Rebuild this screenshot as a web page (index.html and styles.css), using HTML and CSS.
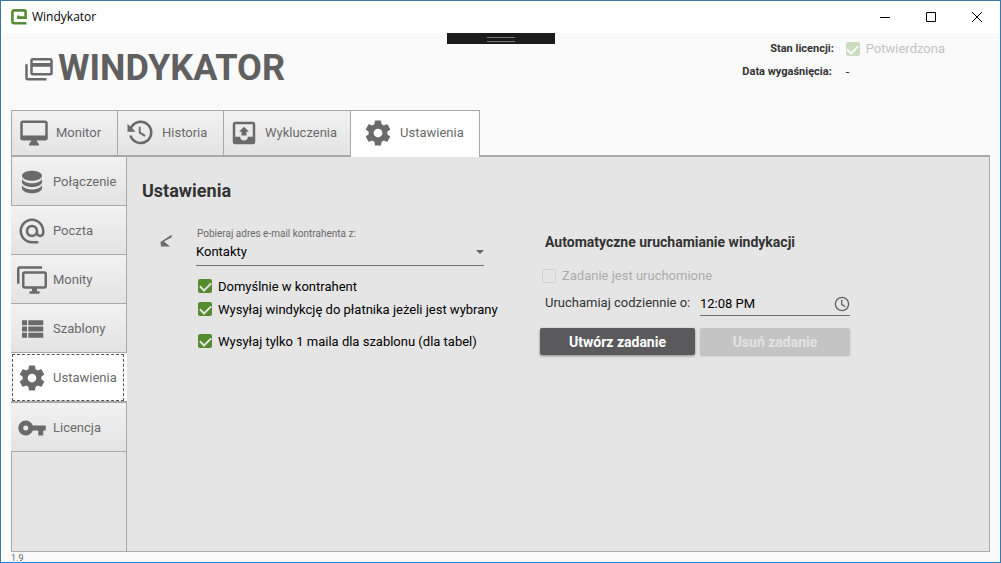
FILE: index.html
```html
<!DOCTYPE html>
<html lang="pl">
<head>
<meta charset="utf-8">
<title>Windykator</title>
<link rel="stylesheet" href="styles.css">
</head>
<body>
<div class="window">
  <header class="titlebar">
    <svg class="titlebar-logo" viewBox="0 0 16 16" aria-hidden="true"><path d="M15.5 14.3H3Q1.4 14.3 1.4 12.8V3Q1.4 1.4 3 1.4H13Q14.6 1.4 14.6 3V8.6H7.4V6.6" fill="none" stroke="#568c35" stroke-width="2.6"/></svg>
    <span class="titlebar-name">Windykator</span>
    <div class="titlebar-controls">
      <button class="control" type="button" aria-label="Minimalizuj"><svg viewBox="0 0 10 10"><path d="M0 5.5H10"/></svg></button>
      <button class="control" type="button" aria-label="Maksymalizuj"><svg viewBox="0 0 10 10"><path d="M.5.5H9.5V9.5H.5Z"/></svg></button>
      <button class="control" type="button" aria-label="Zamknij"><svg viewBox="0 0 10 10"><path d="M0 0L10 10M10 0L0 10"/></svg></button>
    </div>
  </header>

  <div class="body">
    <div class="grip"></div>
    <div class="banner">
      <svg class="icon" viewBox="0 0 24 24" aria-hidden="true"><path d="M21,8V6H7V8H21M21,16V11H7V16H21M21,4A2,2 0 0,1 23,6V16A2,2 0 0,1 21,18H7C5.89,18 5,17.1 5,16V6C5,4.89 5.89,4 7,4H21M3,20H18V22H3A2,2 0 0,1 1,20V9H3V20Z"/></svg>
      <h1 class="banner-title">WINDYKATOR</h1>
      <dl class="license">
        <dt>Stan licencji:</dt>
        <dd><label class="check check--faded"><input type="checkbox" checked disabled><span>Potwierdzona</span></label></dd>
        <dt class="license-date">Data wygaśnięcia:</dt>
        <dd>-</dd>
      </dl>
    </div>

    <nav class="tabs">
      <button class="tab" type="button"><svg class="icon" viewBox="0 0 24 24"><path d="M21,14H3V4H21M21,2H3C1.89,2 1,2.89 1,4V16A2,2 0 0,0 3,18H10L8,21V22H16V21L14,18H21A2,2 0 0,0 23,16V4C23,2.89 22.1,2 21,2Z"/></svg>Monitor</button>
      <button class="tab" type="button"><svg class="icon" viewBox="0 0 24 24"><path d="M11,7V12.11L15.71,14.9L16.5,13.62L12.5,11.25V7M12.5,2C8.97,2 5.91,3.92 4.27,6.77L2,4.5V11H8.5L5.75,8.25C6.96,5.73 9.5,4 12.5,4A7.5,7.5 0 0,1 20,11.5A7.5,7.5 0 0,1 12.5,19C9.23,19 6.47,16.91 5.44,14H3.34C4.44,18.03 8.11,21 12.5,21C17.74,21 22,16.75 22,11.5A9.5,9.5 0 0,0 12.5,2Z"/></svg>Historia</button>
      <button class="tab tab--compact" type="button"><svg class="icon" viewBox="0 0 24 24"><path d="M14,14H10V11H8L12,7L16,11H14V14M5,15V5H19V15H15A3,3 0 0,1 12,18A3,3 0 0,1 9,15H5M19,3H5C3.89,3 3,3.9 3,5V19A2,2 0 0,0 5,21H19A2,2 0 0,0 21,19V5A2,2 0 0,0 19,3Z"/></svg>Wykluczenia</button>
      <button class="tab tab--active" type="button" aria-current="page"><svg class="icon" viewBox="0 0 24 24"><path d="M12,15.5A3.5,3.5 0 0,1 8.5,12A3.5,3.5 0 0,1 12,8.5A3.5,3.5 0 0,1 15.5,12A3.5,3.5 0 0,1 12,15.5M19.43,12.97C19.47,12.65 19.5,12.33 19.5,12C19.5,11.67 19.47,11.34 19.43,11L21.54,9.37C21.73,9.22 21.78,8.95 21.66,8.73L19.66,5.27C19.54,5.05 19.27,4.96 19.05,5.05L16.56,6.05C16.04,5.66 15.5,5.32 14.87,5.07L14.5,2.42C14.46,2.18 14.25,2 14,2H10C9.75,2 9.54,2.18 9.5,2.42L9.13,5.07C8.5,5.32 7.96,5.66 7.44,6.05L4.95,5.05C4.73,4.96 4.46,5.05 4.34,5.27L2.34,8.73C2.21,8.95 2.27,9.22 2.46,9.37L4.57,11C4.53,11.34 4.5,11.67 4.5,12C4.5,12.33 4.53,12.65 4.57,12.97L2.46,14.63C2.27,14.78 2.21,15.05 2.34,15.27L4.34,18.73C4.46,18.95 4.73,19.03 4.95,18.95L7.44,17.94C7.96,18.34 8.5,18.68 9.13,18.93L9.5,21.58C9.54,21.82 9.75,22 10,22H14C14.25,22 14.46,21.82 14.5,21.58L14.87,18.93C15.5,18.67 16.04,18.34 16.56,17.94L19.05,18.95C19.27,19.03 19.54,18.95 19.66,18.73L21.66,15.27C21.78,15.05 21.73,14.78 21.54,14.63L19.43,12.97Z"/></svg>Ustawienia</button>
    </nav>

    <div class="panel">
      <nav class="side">
        <button class="side-tab" type="button"><svg class="icon" viewBox="0 0 24 24"><path d="M12,3C7.58,3 4,4.79 4,7C4,9.21 7.58,11 12,11C16.42,11 20,9.21 20,7C20,4.79 16.42,3 12,3M4,9V12C4,14.21 7.58,16 12,16C16.42,16 20,14.21 20,12V9C20,11.21 16.42,13 12,13C7.58,13 4,11.21 4,9M4,14V17C4,19.21 7.58,21 12,21C16.42,21 20,19.21 20,17V14C20,16.21 16.42,18 12,18C7.58,18 4,16.21 4,14Z"/></svg>Połączenie</button>
        <button class="side-tab" type="button"><svg class="icon" viewBox="0 0 24 24"><path d="M12 1.95c-5.52 0-10 4.48-10 10s4.48 10 10 10h5v-2h-5c-4.34 0-8-3.66-8-8s3.66-8 8-8 8 3.66 8 8v1.43c0 .79-.71 1.57-1.5 1.57s-1.5-.78-1.5-1.57v-1.43c0-2.76-2.24-5-5-5s-5 2.24-5 5 2.24 5 5 5c1.38 0 2.64-.56 3.54-1.47.65.89 1.77 1.47 2.96 1.47 1.97 0 3.5-1.6 3.5-3.57v-1.43c0-5.52-4.48-10-10-10zm0 13c-1.66 0-3-1.34-3-3s1.34-3 3-3 3 1.34 3 3-1.34 3-3 3z"/></svg>Poczta</button>
        <button class="side-tab" type="button"><svg class="icon" viewBox="0 0 24 24"><path d="M22,17V7H6V17H22M22,5A2,2 0 0,1 24,7V17C24,18.11 23.1,19 22,19H16V21H18V23H10V21H12V19H6C4.89,19 4,18.11 4,17V7A2,2 0 0,1 6,5H22M2,3V15H0V3A2,2 0 0,1 2,1H20V3H2Z"/></svg>Monity</button>
        <button class="side-tab" type="button"><svg class="icon" viewBox="0 0 24 24"><path d="M9,5V9H21V5M9,19H21V15H9M9,14H21V10H9M4,9H8V5H4M4,19H8V15H4M4,14H8V10H4V14Z"/></svg>Szablony</button>
        <button class="side-tab side-tab--active" type="button" aria-current="page"><svg class="icon" viewBox="0 0 24 24"><path d="M12,15.5A3.5,3.5 0 0,1 8.5,12A3.5,3.5 0 0,1 12,8.5A3.5,3.5 0 0,1 15.5,12A3.5,3.5 0 0,1 12,15.5M19.43,12.97C19.47,12.65 19.5,12.33 19.5,12C19.5,11.67 19.47,11.34 19.43,11L21.54,9.37C21.73,9.22 21.78,8.95 21.66,8.73L19.66,5.27C19.54,5.05 19.27,4.96 19.05,5.05L16.56,6.05C16.04,5.66 15.5,5.32 14.87,5.07L14.5,2.42C14.46,2.18 14.25,2 14,2H10C9.75,2 9.54,2.18 9.5,2.42L9.13,5.07C8.5,5.32 7.96,5.66 7.44,6.05L4.95,5.05C4.73,4.96 4.46,5.05 4.34,5.27L2.34,8.73C2.21,8.95 2.27,9.22 2.46,9.37L4.57,11C4.53,11.34 4.5,11.67 4.5,12C4.5,12.33 4.53,12.65 4.57,12.97L2.46,14.63C2.27,14.78 2.21,15.05 2.34,15.27L4.34,18.73C4.46,18.95 4.73,19.03 4.95,18.95L7.44,17.94C7.96,18.34 8.5,18.68 9.13,18.93L9.5,21.58C9.54,21.82 9.75,22 10,22H14C14.25,22 14.46,21.82 14.5,21.58L14.87,18.93C15.5,18.67 16.04,18.34 16.56,17.94L19.05,18.95C19.27,19.03 19.54,18.95 19.66,18.73L21.66,15.27C21.78,15.05 21.73,14.78 21.54,14.63L19.43,12.97Z"/></svg>Ustawienia</button>
        <button class="side-tab" type="button"><svg class="icon" viewBox="0 0 24 24"><path d="M7,14A2,2 0 0,1 5,12A2,2 0 0,1 7,10A2,2 0 0,1 9,12A2,2 0 0,1 7,14M12.65,10C11.83,7.67 9.61,6 7,6A6,6 0 0,0 1,12A6,6 0 0,0 7,18C9.61,18 11.83,16.33 12.65,14H17V18H21V14H23V10H12.65Z"/></svg>Licencja</button>
        <div class="side-rest"></div>
      </nav>

      <main class="content">
        <h2 class="content-title">Ustawienia</h2>
        <div class="columns">
          <section class="options">
            <svg class="options-mark" viewBox="0 0 12 14" aria-hidden="true"><path d="M11.7 .8V3.2L4 7.6L10 12.6H1L.5 8Z"/></svg>
            <div class="options-body">
              <div class="field">
                <label class="field-label" for="source">Pobieraj adres e-mail kontrahenta z:</label>
                <div class="field-box">
                  <select class="field-input" id="source"><option>Kontakty</option></select>
                  <svg class="caret" viewBox="0 0 8 4" aria-hidden="true"><path d="M0 0H8L4 4Z"/></svg>
                </div>
              </div>
              <div class="checks">
                <label class="check"><input type="checkbox" checked><span>Domyślnie w kontrahent</span></label>
                <label class="check"><input type="checkbox" checked><span>Wysyłaj windykcję do płatnika jeżeli jest wybrany</span></label>
                <label class="check check--apart"><input type="checkbox" checked><span>Wysyłaj tylko 1 maila dla szablonu (dla tabel)</span></label>
              </div>
            </div>
          </section>

          <section class="schedule">
            <h3 class="schedule-title">Automatyczne uruchamianie windykacji</h3>
            <label class="check check--faded schedule-state"><input type="checkbox" disabled><span>Zadanie jest uruchomione</span></label>
            <div class="schedule-grid">
              <label class="schedule-label" for="time">Uruchamiaj codziennie o:</label>
              <div class="field-box field-box--inset">
                <input class="field-input" id="time" type="text" value="12:08 PM">
                <svg class="clock" viewBox="0 0 16 16" aria-hidden="true"><circle cx="8" cy="8" r="6.6"/><path d="M7.7 3.8V8.3L11.2 10.8"/></svg>
              </div>
              <button class="action" type="button">Utwórz zadanie</button>
              <button class="action" type="button" disabled>Usuń zadanie</button>
            </div>
          </section>
        </div>
      </main>
    </div>
    <footer class="version">1.9</footer>
  </div>
</div>
</body>
</html>
```
FILE: styles.css
```css
* { box-sizing: border-box; }

body {
  margin: 0;
  font-family: Roboto, "Liberation Sans", sans-serif;
  font-size: 13px;
  line-height: 20px;
  color: #333;
}

button, input, select { font: inherit; }

.window {
  display: flex;
  flex-direction: column;
  min-height: 100vh;
  border: 1px solid #3a77ab;
  border-bottom-color: #1883d7;
  background: #fafafa;
}

.titlebar {
  display: flex;
  align-items: center;
  height: 32px;
  padding-left: 10px;
  gap: 5px;
  background: #fff;
  color: #000;
}
.titlebar-logo { width: 16px; height: 16px; }
.titlebar-name { font-family: "Open Sans", "Noto Sans", sans-serif; font-size: 12px; }
.titlebar-controls { display: flex; margin-left: auto; }
.control {
  display: grid;
  place-items: center;
  width: 46px;
  height: 30px;
  padding: 0;
  border: 0;
  background: none;
}
.control svg { width: 10px; height: 10px; overflow: visible; fill: none; stroke: #000; stroke-width: 1; }

.body {
  position: relative;
  display: flex;
  flex: 1;
  flex-direction: column;
  padding: 0 10px;
}

.grip {
  position: absolute;
  top: 0;
  left: 50%;
  width: 108px;
  height: 11px;
  transform: translateX(-50%);
  background: #1b1b1b;
}
.grip::before {
  content: "";
  display: block;
  width: 28px;
  height: 3px;
  margin: 4px auto;
  border: solid #777;
  border-width: 1px 0;
}

.icon { flex: none; width: 30px; height: 30px; fill: #6a6a6a; }

.banner {
  display: flex;
  align-items: flex-start;
  height: 77px;
  padding: 7px 41px 0 13px;
}
.banner .icon { margin-top: 13px; }
.banner-title {
  margin: 7px 0 0 4px;
  font-size: 36px;
  line-height: 42px;
  font-weight: 700;
  color: #606060;
}
.license {
  display: grid;
  grid-template-columns: auto auto;
  gap: 5px 12px;
  margin: 0 4px 0 auto;
}
.license dt { font-size: 11px; line-height: 18px; font-weight: 700; text-align: right; }
.license dd { margin: 0; line-height: 18px; }
.license .license-date { padding-right: 2px; }

.tabs {
  display: flex;
  height: 47px;
  box-shadow: inset 0 -2px #aaa;
}
.tab, .side-tab {
  display: flex;
  align-items: center;
  border: 0 solid #a8a8a8;
  background: linear-gradient(#f2f2f2, #e3e3e3);
  color: #6a6a6a;
  white-space: nowrap;
}
.tab {
  gap: 7px;
  min-width: 106px;
  margin-bottom: 2px;
  padding: 0 12px 0 7px;
  border-width: 1px 0 0 1px;
}
.tab--compact { gap: 6px; padding: 0 13px 0 5px; }
.tab--active {
  margin-bottom: 0;
  padding: 0 15px 2px 12px;
  border-right-width: 1px;
  background: #fff;
}

.panel {
  display: flex;
  flex: 1;
  border: solid #aaa;
  border-width: 0 1px 1px 0;
  background: #e5e5e5;
}
.side { display: flex; flex: none; flex-direction: column; width: 116px; }
.side-tab {
  gap: 6px;
  height: 49px;
  padding: 1px 0 0 6px;
  border-width: 0 1px 1px 0;
}
.side-tab:first-child { padding-left: 5px; border-left-width: 1px; }
.side-tab--active {
  position: relative;
  height: 50px;
  border-width: 0 0 2px;
  background: #fff;
}
.side-tab--active::after {
  content: "";
  position: absolute;
  inset: 1px 3px 0 1px;
  border: 1px dashed #555;
}
.side-rest { flex: 1; border: solid #a8a8a8; border-width: 0 1px; }

.content { flex: 1; min-width: 0; padding: 22px 15px; }
.content-title { margin: 0; font-size: 18px; line-height: 24px; font-weight: 700; }
.columns {
  display: grid;
  grid-template-columns: minmax(0, 398px) minmax(0, 310px);
  padding-top: 24px;
}

.options { display: flex; padding-left: 18px; }
.options-mark { flex: none; width: 12px; height: 14px; margin: 7px 24px 0 0; fill: #6a6a6a; }
.options-body { flex: 1; min-width: 0; }
.field { margin-right: 56px; }
.field-label { display: block; font-size: 10px; line-height: 14px; color: #6a6a6a; padding-left: 1px; }
.field-box {
  display: flex;
  align-items: center;
  height: 24px;
  border-bottom: 1px solid #707070;
}
.field-input {
  flex: 1;
  min-width: 0;
  height: 23px;
  padding: 0;
  border: 0;
  outline: 0;
  appearance: none;
  background: none;
  color: #000;
}
.caret { width: 8px; height: 4px; fill: #666; }
.field .field-box { height: 25px; padding-bottom: 3px; }

.checks { padding: 9px 0 0 2px; }
.check {
  display: flex;
  align-items: center;
  gap: 6px;
  height: 23px;
  color: #000;
  white-space: nowrap;
}
.check--apart { margin-top: 9px; }
.check input {
  display: grid;
  flex: none;
  width: 14px;
  height: 14px;
  margin: 0;
  border-radius: 2px;
  appearance: none;
  justify-items: center;
}
.checks input { margin-bottom: 2px; }
.check input:checked { background: #558b2f; }
.check input:checked::before {
  content: "";
  width: 5px;
  height: 9px;
  margin-top: 1px;
  border: solid #e5e5e5;
  border-width: 0 2px 2px 0;
  transform: rotate(45deg);
}
.check input:not(:checked) { border: 1px solid #d2d2d2; }
.check--faded { height: 18px; color: #ababab; }
.license .check { color: #c4c4c4; }
.license .check input:checked { background: #ccdcc1; }
.license .check input:checked::before { border-color: #fafafa; }

.schedule { padding-top: 5px; }
.schedule-title { margin: 0 0 15px; padding-left: 5px; font-size: 14px; line-height: 20px; font-weight: 700; white-space: nowrap; }
.schedule-state { padding-left: 2px; }
.schedule-grid {
  display: grid;
  grid-template-columns: minmax(0, 155fr) minmax(0, 150fr);
  gap: 12px 5px;
  padding-top: 7px;
}
.schedule-label { padding-left: 5px; line-height: 22px; white-space: nowrap; }
.clock { width: 16px; height: 16px; fill: none; stroke: #606060; stroke-width: 1.3; }
.action {
  height: 27px;
  padding: 0;
  border: 0;
  border-radius: 2px;
  background: #5a5a5c;
  box-shadow: 0 1px 3px #0006;
  color: #fff;
  font-size: 14px;
  font-weight: 700;
}
.action:disabled { background: #c4c4c4; box-shadow: 0 1px 2px #0003; color: #e2e2e2; }

.version { height: 10px; font-size: 9px; line-height: 12px; color: #666; }
```
